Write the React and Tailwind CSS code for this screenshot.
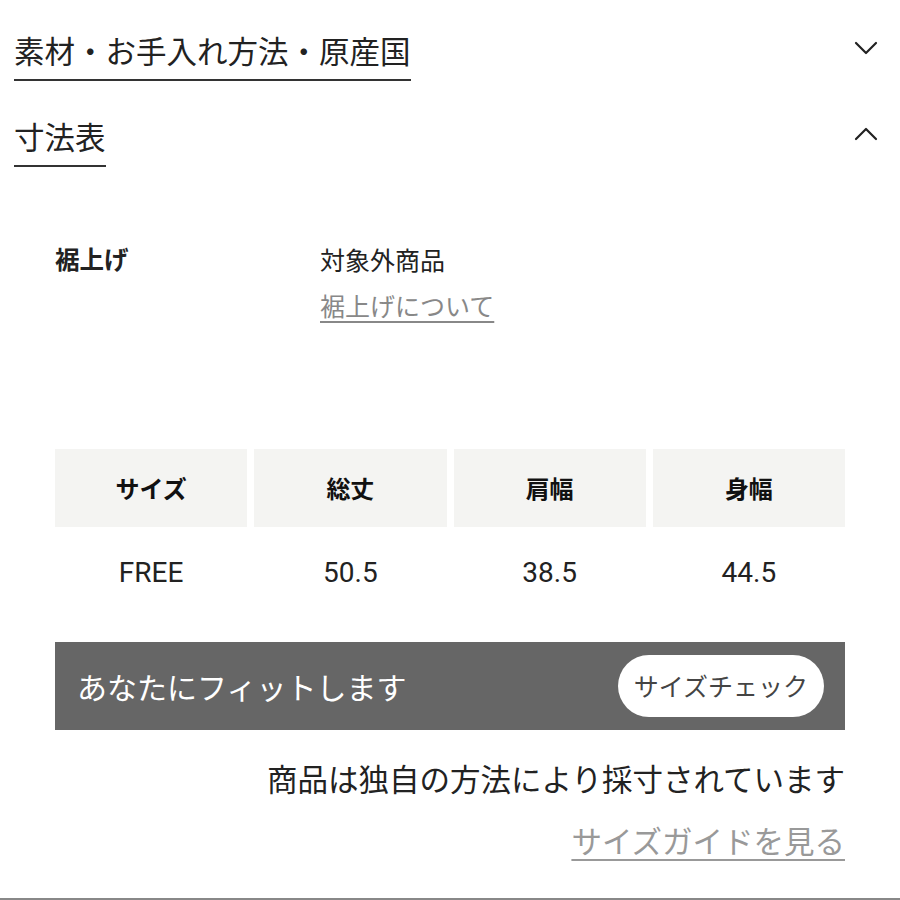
import React from "react"

const font = { fontFamily: '"Noto Sans CJK JP", "Noto Sans", sans-serif' }

function Chevron({ up }) {
    return (
        <svg width="24" height="14" viewBox="0 0 24 14" fill="none" stroke="#222" strokeWidth="2.2" strokeLinecap="round" strokeLinejoin="round">
            {up ? <path d="M2 12 L12 2 L22 12" /> : <path d="M2 2 L12 12 L22 2" />}
        </svg>
    )
}

function Section({ title, up }) {
    return (
        <div className="flex justify-between items-start pl-[14px] pr-[22px]">
            <div className="border-b-2 border-[#333] pb-[7px] text-[30.5px] leading-[44px] text-[#222]">{title}</div>
            <div className="pt-[13px]"><Chevron up={up} /></div>
        </div>
    )
}

const heads = ["サイズ", "総丈", "肩幅", "身幅"]
const vals = ["FREE", "50.5", "38.5", "44.5"]

export default function App() {
    return (
        <div className="w-[900px] h-[900px] bg-white overflow-hidden relative" style={font}>
            <div className="pt-[28px] flex flex-col gap-[33px]">
                <Section title="素材・お手入れ方法・原産国" />
                <Section title="寸法表" up />
            </div>

            <div className="mx-[55px] mt-[75px] flex">
                <div className="w-[265px] text-[24.5px] font-bold text-[#222] leading-[34px]">裾上げ</div>
                <div className="flex flex-col gap-[12px]">
                    <div className="text-[25px] text-[#222] leading-[34px]">対象外商品</div>
                    <div className="text-[25px] text-[#888] leading-[34px] underline underline-offset-[5px] decoration-[1.5px]">裾上げについて</div>
                </div>
            </div>

            <div className="mx-[55px] mt-[127px]">
                <div className="grid grid-cols-4 gap-[7px]">
                    {heads.map(h => (
                        <div key={h} className="h-[78px] bg-[#f4f4f2] flex items-center justify-center text-[24px] font-bold text-[#111]">{h}</div>
                    ))}
                </div>
                <div className="grid grid-cols-4 gap-[7px] h-[92px]">
                    {vals.map(v => (
                        <div key={v} className="flex items-center justify-center text-[28px] text-[#222]" style={{ fontFamily: 'Roboto, "Liberation Sans", sans-serif' }}>{v}</div>
                    ))}
                </div>
                <div className="mt-[23px] h-[88px] bg-[#666] flex items-center justify-between pl-[22px] pr-[21px]">
                    <div className="text-[30px] text-white">あなたにフィットします</div>
                    <div className="h-[62px] w-[206px] rounded-full bg-white flex items-center justify-center text-[25px] text-[#444]">サイズチェック</div>
                </div>
                <div className="mt-[26px] flex flex-col items-end gap-[18px]">
                    <div className="text-[30.5px] text-[#222] leading-[44px]">商品は独自の方法により採寸されています</div>
                    <div className="text-[30.5px] text-[#999] leading-[44px] underline underline-offset-[6px] decoration-[2px]">サイズガイドを見る</div>
                </div>
            </div>
            <div className="absolute left-0 right-0 bottom-0 h-[2px] bg-[#888]" />
        </div>
    )
}
